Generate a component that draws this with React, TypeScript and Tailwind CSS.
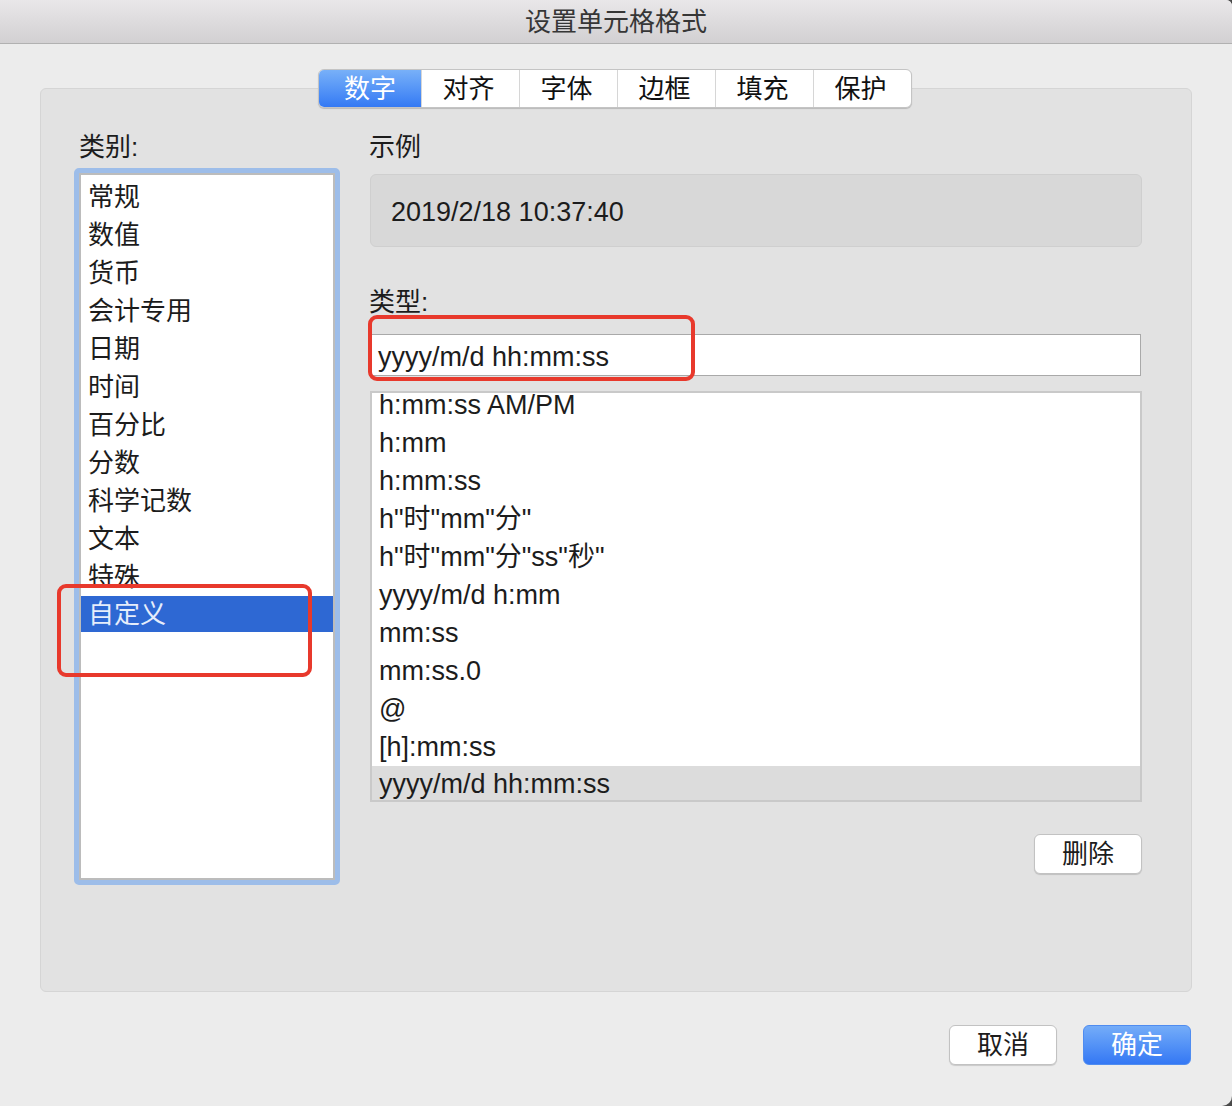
import React from 'react';

const categories = ['常规', '数值', '货币', '会计专用', '日期', '时间', '百分比', '分数', '科学记数', '文本', '特殊', '自定义'];

const formats = [
  'h:mm:ss AM/PM',
  'h:mm',
  'h:mm:ss',
  'h"时"mm"分"',
  'h"时"mm"分"ss"秒"',
  'yyyy/m/d h:mm',
  'mm:ss',
  'mm:ss.0',
  '@',
  '[h]:mm:ss',
  'yyyy/m/d hh:mm:ss',
];

const tabs = ['数字', '对齐', '字体', '边框', '填充', '保护'];

export default function App() {
  return (
    <div className="w-[1232px] h-[1106px] bg-[#4a4a4a] font-['Liberation_Sans','Noto_Sans_CJK_SC',sans-serif] text-[#1c1c1c]">
      <div className="relative w-full h-full bg-[#ececec] rounded-tr-[6px] rounded-br-[10px] overflow-hidden">
        {/* title bar */}
        <div className="h-[44px] bg-gradient-to-b from-[#e9e7e9] to-[#d2d0d2] border-b border-[#b1b1b1] flex items-center justify-center">
          <span className="text-[26px] leading-none text-[#363636]">设置单元格格式</span>
        </div>

        <div className="px-[40px]">
          {/* tabs */}
          <div className="relative z-10 mt-[25px] flex justify-center">
            <div className="ml-[-2px] flex h-[39px] rounded-[6px] border border-[#c4c4c4] bg-white shadow-[0_1px_1px_rgba(0,0,0,0.18)] overflow-hidden">
              {tabs.map((t, i) => (
                <div
                  key={t}
                  className={
                    i === 0
                      ? 'w-[102px] pt-[2px] flex items-center justify-center text-[26px] text-white bg-gradient-to-b from-[#78b0f8] to-[#3479f4]'
                      : 'w-[98px] pt-[2px] pr-[4px] flex items-center justify-center text-[26px] text-[#111] border-l border-[#d6d6d6]'
                  }
                >
                  {t}
                </div>
              ))}
            </div>
          </div>

          {/* panel */}
          <div className="-mt-[20px] h-[904px] rounded-[6px] border border-[#d5d5d5] bg-[#e2e2e2] pt-[40px] pl-[33px] flex gap-[29px]">
            {/* left column */}
            <div className="w-[266px] flex flex-col">
              <div className="h-[36px] pl-[5px] flex items-center text-[26px]">类别:</div>
              <div className="mt-[3px] h-[717px] rounded-[5px] border-[5px] border-[#9dbde9]">
                <div className="h-full border-2 border-[#bcbcbc] bg-white pt-[3px] overflow-hidden">
                  {categories.map((c, i) => (
                    <div
                      key={c}
                      className={
                        i === categories.length - 1
                          ? 'h-[36px] pl-[7px] flex items-center text-[26px] bg-[#2e68d3] text-[#e6edfb]'
                          : 'h-[38px] pl-[7px] flex items-center text-[26px]'
                      }
                    >
                      {c}
                    </div>
                  ))}
                </div>
              </div>
            </div>

            {/* right column */}
            <div className="w-[773px] flex flex-col text-[27px]">
              <div className="h-[36px] flex items-center text-[26px]">示例</div>
              <div className="mt-[9px] ml-[1px] h-[73px] w-[772px] rounded-[6px] border border-[#cfcfcf] bg-[#d8d8d8] pl-[20px] pt-[4px] flex items-center">
                2019/2/18 10:37:40
              </div>
              <div className="mt-[36px] h-[36px] pt-[2px] flex items-center text-[26px]">类型:</div>
              <div className="mt-[15px] ml-[1px] h-[42px] w-[771px] border border-[#a9a9a9] bg-white pl-[7px] pt-[5px] flex items-center">
                yyyy/m/d hh:mm:ss
              </div>
              <div className="mt-[15px] ml-[1px] h-[411px] w-[772px] border-2 border-[#c9c9c9] bg-white overflow-hidden">
                <div className="-mt-[7px]">
                  {formats.map((f, i) => (
                    <div
                      key={f}
                      className={
                        i === formats.length - 1
                          ? 'h-[36px] pl-[7px] pt-[1px] flex items-center bg-[#dcdcdc]'
                          : 'h-[38px] pl-[7px] pt-[1px] flex items-center'
                      }
                    >
                      {f}
                    </div>
                  ))}
                </div>
              </div>
              <div className="mt-[32px] flex justify-end">
                <button className="h-[40px] w-[108px] rounded-[6px] border border-[#c2c2c2] bg-white shadow-[0_1px_1px_rgba(0,0,0,0.15)] text-[26px] flex items-center justify-center">
                  删除
                </button>
              </div>
            </div>
          </div>

          {/* bottom buttons */}
          <div className="mt-[33px] flex justify-end gap-[26px] pr-[1px]">
            <button className="h-[40px] w-[108px] rounded-[6px] border border-[#c2c2c2] bg-white shadow-[0_1px_1px_rgba(0,0,0,0.15)] text-[26px] flex items-center justify-center">
              取消
            </button>
            <button className="h-[40px] w-[108px] rounded-[6px] border border-[#4f8cf0] bg-gradient-to-b from-[#74acf8] to-[#3477f4] text-white text-[26px] flex items-center justify-center">
              确定
            </button>
          </div>
        </div>

        {/* red annotation boxes */}
        <div className="absolute left-[57px] top-[584px] w-[255px] h-[93px] rounded-[9px] border-[4px] border-[#e8392c] pointer-events-none" />
        <div className="absolute left-[368px] top-[315px] w-[327px] h-[66px] rounded-[9px] border-[4px] border-[#e8392c] pointer-events-none" />
      </div>
    </div>
  );
}
